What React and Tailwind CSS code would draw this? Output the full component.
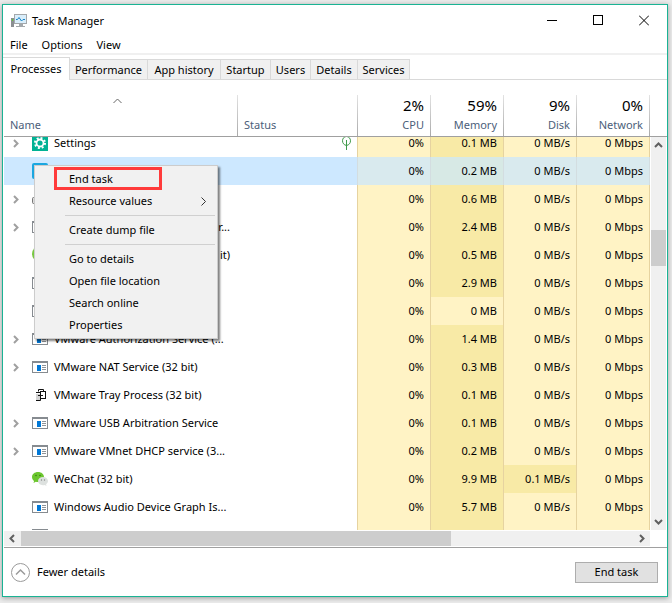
import React from 'react';

const TABS = [
  { label: 'Performance', width: 'w-[78px]' },
  { label: 'App history', width: 'w-[73px]' },
  { label: 'Startup', width: 'w-[50px]' },
  { label: 'Users', width: 'w-[40px]' },
  { label: 'Details', width: 'w-[47px]' },
  { label: 'Services', width: 'w-[52px]' },
];

const METRICS = [
  { label: 'CPU', total: '2%' },
  { label: 'Memory', total: '59%' },
  { label: 'Disk', total: '9%' },
  { label: 'Network', total: '0%' },
];

const PROCESSES = [
  { name: 'Settings', icon: 'settings', expandable: true, suspended: true, memory: '0.1 MB' },
  { name: '', icon: 'app', selected: true, memory: '0.2 MB' },
  { name: '', icon: 'printer', expandable: true, memory: '0.6 MB' },
  { name: 'r...', icon: 'service', expandable: true, alignEnd: true, memory: '2.4 MB' },
  { name: 'it)', icon: 'green', alignEnd: true, memory: '0.5 MB' },
  { name: '', icon: 'service', memory: '2.9 MB' },
  { name: '', icon: 'service', memory: '0 MB' },
  { name: 'VMware Authorization Service (...', icon: 'service', expandable: true, memory: '1.4 MB' },
  { name: 'VMware NAT Service (32 bit)', icon: 'service', expandable: true, memory: '0.3 MB' },
  { name: 'VMware Tray Process (32 bit)', icon: 'tray', memory: '0.1 MB' },
  { name: 'VMware USB Arbitration Service', icon: 'service', expandable: true, memory: '0.1 MB' },
  { name: 'VMware VMnet DHCP service (3...', icon: 'service', expandable: true, memory: '0.2 MB' },
  { name: 'WeChat (32 bit)', icon: 'wechat', memory: '9.9 MB', disk: '0.1 MB/s' },
  { name: 'Windows Audio Device Graph Is...', icon: 'service', memory: '5.7 MB' },
  { name: '', icon: 'service', blank: true },
];

const Chevron = ({ direction, className }) => {
  const points = {
    up: '1,6 4.5,2.5 8,6',
    down: '1,3 4.5,6.5 8,3',
    left: '6,1 2.5,4.5 6,8',
    right: '3,1 6.5,4.5 3,8',
  };
  return (
    <svg width="9" height="9" viewBox="0 0 9 9" fill="none" className={className}>
      <polyline points={points[direction]} stroke="currentColor" strokeWidth="2" />
    </svg>
  );
};

const TaskManagerIcon = () => (
  <svg width="17" height="16" viewBox="0 0 17 16">
    <rect x="0" y="5" width="3" height="9" fill="#8b8f92" />
    <rect x="1" y="6" width="1" height="2" fill="#5fd12a" />
    <rect x="3.5" y="1.5" width="12" height="9" fill="#d9eefb" stroke="#a3a8ab" />
    <polyline points="5,6.5 6.500,6.500 8,4.500 10.500,8 12,6.500 14,6.500" fill="none" stroke="#1583c7" />
    <path d="M8 11h4v2h2v1H5v-1h3z" fill="#a3a8ab" />
  </svg>
);

const ProcessIcon = ({ type }) => {
  switch (type) {
    case 'settings':
      return (
        <svg width="16" height="16" viewBox="0 0 16 16">
          <rect width="16" height="16" fill="#00b294" />
          <circle cx="8" cy="8" r="3.500" fill="none" stroke="#fff" strokeWidth="1.800" />
          <circle cx="8" cy="8" r="5" fill="none" stroke="#fff" strokeWidth="2" strokeDasharray="1.96 1.96" />
        </svg>
      );
    case 'app':
      return (
        <svg width="16" height="16" viewBox="0 0 16 16">
          <rect width="16" height="16" rx="2" fill="#1ba7e0" />
        </svg>
      );
    case 'printer':
      return (
        <svg width="16" height="16" viewBox="0 0 16 16">
          <path d="M3 4h10v3H3z" fill="#c4c4c4" />
          <rect x="0.5" y="6.5" width="15" height="6" rx="1" fill="#ddd" stroke="#777" />
        </svg>
      );
    case 'green':
      return (
        <svg width="16" height="16" viewBox="0 0 16 16">
          <circle cx="8" cy="7" r="8" fill="#7ac943" />
        </svg>
      );
    case 'tray':
      return (
        <svg width="16" height="16" viewBox="0 0 16 16" fill="none">
          <rect x="4" y="7" width="4" height="6" fill="#d4d4d4" />
          <g stroke="#111">
            <path d="M6.500 4.500V2.500H11.500V4.500" />
            <rect x="8.500" y="4.500" width="5" height="7" />
            <path d="M4 5.500H8.500V13.500H4M6 8.500H11" />
          </g>
        </svg>
      );
    case 'wechat':
      return (
        <svg width="16" height="16" viewBox="0 0 16 16">
          <path d="M6 1C2.500 1 0 3.200 0 6c0 1.600.8 3 2.100 3.900L1.500 12l2.300-1.200c.7.2 1.400.3 2.200.3 3.500 0 6-2.300 6-5.100S9.500 1 6 1z" fill="#6cc62f" />
          <path d="M11 6c-2.900 0-5 1.800-5 4.100s2.100 4.100 5 4.100c.6 0 1.200-.1 1.700-.2l1.800.9-.4-1.600c1.100-.7 1.900-1.900 1.900-3.200C16 7.800 13.900 6 11 6z" fill="#dde1df" />
          <g fill="#3b7c17">
            <circle cx="4" cy="4.500" r=".8" />
            <circle cx="8" cy="4.500" r=".8" />
          </g>
          <g fill="#888">
            <circle cx="9.500" cy="9" r=".7" />
            <circle cx="12.500" cy="9" r=".7" />
          </g>
        </svg>
      );
    default:
      return (
        <svg width="16" height="12" viewBox="0 0 16 12" shapeRendering="crispEdges">
          <rect width="16" height="12" fill="#868b90" />
          <rect x="1" y="2" width="14" height="9" fill="#fff" />
          <rect x="5" y="4" width="4" height="6" fill="#0078d7" />
          <path d="M10 4h4v1h-4zM10 6h4v1h-4zM10 8h4v1h-4z" fill="#8f9499" />
        </svg>
      );
  }
};

const LeafIcon = () => (
  <svg width="9" height="14" viewBox="0 0 9 14" fill="none" stroke="#3f9a4a">
    <path d="M4.500 9.500C2 9 .500 7.200.500 4.800.500 2.400 2.200.500 4.500.500s4 1.900 4 4.300c0 2.400-1.500 4.200-4 4.700zM4.500 4v10" />
  </svg>
);

const Columns = () => (
  <colgroup>
    <col />
    <col className="w-[120px]" />
    <col className="w-[73px]" />
    <col className="w-[73px]" />
    <col className="w-[73px]" />
    <col className="w-[73px]" />
  </colgroup>
);

const TitleBar = () => (
  <header className="flex h-[31px] shrink-0 items-center">
    <div className="flex items-center gap-1 pl-2">
      <TaskManagerIcon />
      <h1>Task Manager</h1>
    </div>
    <div className="ml-auto flex h-full">
      <button aria-label="Minimize" className="flex w-[46px] items-center justify-center">
        <svg width="10" height="11" viewBox="0 0 10 11" stroke="#000">
          <path d="M0 5.500h10" />
        </svg>
      </button>
      <button aria-label="Maximize" className="flex w-[46px] items-center justify-center">
        <svg width="10" height="11" viewBox="0 0 10 11" fill="none" stroke="#000">
          <rect x="0.500" y="0.500" width="9" height="9" />
        </svg>
      </button>
      <button aria-label="Close" className="flex w-[46px] items-center justify-center">
        <svg width="10" height="11" viewBox="0 0 10 11" stroke="#000">
          <path d="M0 0.500l10 10M10 0.500l-10 10" />
        </svg>
      </button>
    </div>
  </header>
);

const MenuBar = () => (
  <nav className="flex h-[19px] shrink-0 items-center gap-3.5 border-b-2 border-[#f0f0f0] pl-[7px]">
    <button>File</button>
    <button>Options</button>
    <button>View</button>
  </nav>
);

const TabStrip = () => (
  <div role="tablist" className="mt-0.5 flex h-[23px] shrink-0 items-end border-b border-[#d9d9d9]">
    <button
      role="tab"
      aria-selected="true"
      className="-mb-px h-[23px] w-[67px] border-t border-r border-[#d9d9d9] bg-white"
    >
      Processes
    </button>
    {TABS.map((tab) => (
      <button
        key={tab.label}
        role="tab"
        aria-selected="false"
        className={`h-5 border-t border-r border-[#d9d9d9] bg-[#f0f0f0] ${tab.width}`}
      >
        {tab.label}
      </button>
    ))}
  </div>
);

const headEdge =
  'border-r [border-image:linear-gradient(#e4e4e4,#a8a8a8)_1]';

const HeaderRow = () => (
  <div className="ml-px shrink-0 border-b border-[#a0a0a0] pt-[15px] pr-[17px]">
    <table className="w-full table-fixed border-separate border-spacing-0 text-[#4c607a]">
      <Columns />
      <thead>
        <tr className="h-[41px]">
          <th className={`p-0 font-normal ${headEdge}`}>
            <div className="flex h-[41px] flex-col justify-between pt-0.5 pb-[3px]">
              <svg width="9" height="9" viewBox="0 0 9 9" fill="none" stroke="#666" className="ml-[109px]">
                <polyline points="0.500,6 4.500,2 8.500,6" />
              </svg>
              <span className="pl-1.5 text-left leading-4">Name</span>
            </div>
          </th>
          <th className={`p-0 pb-[3px] pl-1.5 text-left align-bottom leading-4 font-normal ${headEdge}`}>Status</th>
          {METRICS.map((metric) => (
            <th key={metric.label} className={`p-0 pr-1.5 pb-[3px] text-right align-bottom font-normal ${headEdge}`}>
              <div className="pb-0.5 text-[15px] leading-5 text-black">{metric.total}</div>
              <div className="leading-4">{metric.label}</div>
            </th>
          ))}
        </tr>
      </thead>
    </table>
  </div>
);

const MetricCell = ({ value, level, selected }) => {
  let tone = level === 'high' ? 'bg-[#f8eaa6] border-[#e6d3a0]' : 'bg-[#fff3c5] border-[#e6d3a0]';
  if (selected) {
    tone = level === 'high' ? 'bg-[#d7e9e5] border-[#d3dde0]' : 'bg-[#d9eaee] border-[#d3dde0]';
  }
  return <td className={`border-r p-0 pr-1.5 text-right ${tone}`}>{value}</td>;
};

const ProcessRow = ({ process }) => {
  const { name, icon, expandable, suspended, selected, alignEnd, memory, disk, blank } = process;
  return (
    <tr className={`h-7 ${selected ? 'bg-[#cde8ff]' : ''}`}>
      <td className="p-0">
        <div className="flex h-7 items-center">
          <span className="flex w-7 shrink-0 pl-[7px] text-[#a0a0a0]">
            {expandable && <Chevron direction="right" />}
          </span>
          <span className="flex w-[22px] shrink-0">
            <ProcessIcon type={icon} />
          </span>
          <span className={`whitespace-nowrap ${alignEnd ? 'ml-auto pr-2' : ''}`}>{name}</span>
        </div>
      </td>
      <td className={`border-r p-0 pr-1.5 ${selected ? 'border-[#d3dde0]' : 'border-[#e6d3a0]'}`}>
        {suspended && (
          <span className="flex justify-end">
            <LeafIcon />
          </span>
        )}
      </td>
      <MetricCell value={blank ? '' : '0%'} selected={selected} />
      <MetricCell value={memory} level={memory === '0 MB' ? 'low' : 'high'} selected={selected} />
      <MetricCell value={blank ? '' : disk || '0 MB/s'} level={disk ? 'high' : 'low'} selected={selected} />
      <MetricCell value={blank ? '' : '0 Mbps'} selected={selected} />
    </tr>
  );
};

const MenuItem = ({ children }) => (
  <button role="menuitem" className="flex h-[22px] w-full items-center pr-2.5 pl-[34px] text-left">
    {children}
  </button>
);

const MenuDivider = () => <hr className="my-[3px] mr-0.5 ml-[30px] border-[#d0d0d0]" />;

const ContextMenu = () => (
  <div
    role="menu"
    className="absolute top-7 left-[30px] w-[184px] border border-[#ccc] bg-[#f1f1f1] py-0.5 shadow-[2px_2px_2px_rgba(0,0,0,0.5)]"
  >
    <MenuItem>End task</MenuItem>
    <span className="absolute top-px left-[19px] h-[23px] w-[108px] border-3 border-[#ff3b3b]" />
    <MenuItem>
      Resource values
      <svg width="7" height="9" viewBox="0 0 7 9" fill="none" stroke="#333" className="ml-auto">
        <polyline points="1.500,0.500 5.500,4.500 1.500,8.500" />
      </svg>
    </MenuItem>
    <MenuDivider />
    <MenuItem>Create dump file</MenuItem>
    <MenuDivider />
    <MenuItem>Go to details</MenuItem>
    <MenuItem>Open file location</MenuItem>
    <MenuItem>Search online</MenuItem>
    <MenuItem>Properties</MenuItem>
  </div>
);

const VerticalScrollbar = () => (
  <div className="mr-px ml-px flex w-[15px] shrink-0 flex-col items-center bg-[#f0f0f0] text-[#606060]">
    <button aria-label="Scroll up" className="flex h-[17px] w-full items-center justify-center">
      <Chevron direction="up" />
    </button>
    <div className="grow-[76]" />
    <div className="h-9 w-full bg-[#cdcdcd]" />
    <div className="grow-[247]" />
    <button aria-label="Scroll down" className="flex h-[17px] w-full items-center justify-center">
      <Chevron direction="down" />
    </button>
  </div>
);

const HorizontalScrollbar = () => (
  <div className="mt-px mr-[17px] ml-px flex h-[15px] shrink-0 bg-[#f0f0f0] text-[#606060]">
    <button aria-label="Scroll left" className="flex w-[17px] items-center justify-center">
      <Chevron direction="left" />
    </button>
    <div className="grow-[430] bg-[#cdcdcd]" />
    <div className="grow-[182]" />
    <button aria-label="Scroll right" className="flex w-[17px] items-center justify-center">
      <Chevron direction="right" />
    </button>
  </div>
);

const Footer = () => (
  <footer className="mt-px ml-px flex h-[49px] shrink-0 items-center justify-between border-t border-[#a0a0a0] pr-[9px] pl-[7px]">
    <button className="flex items-center gap-[7px]">
      <svg width="19" height="19" viewBox="0 0 19 19" fill="none" stroke="#9a9a9a">
        <circle cx="9.500" cy="9.500" r="9" />
        <polyline points="5,11.500 9.500,7 14,11.500" strokeWidth="1.500" />
      </svg>
      Fewer details
    </button>
    <button className="h-[21px] w-[83px] border border-[#adadad] bg-[#e1e1e1]">End task</button>
  </footer>
);

const App = () => (
  <div className="flex h-screen bg-[#ebebeb] pt-1 pr-1 pb-1.5 pl-0.5 font-['Noto_Sans','Open_Sans',sans-serif] text-[11px] leading-4 text-black">
    <main className="flex min-w-0 flex-1 flex-col border border-[#1ab394] bg-white shadow-[0_1px_5px_rgba(0,0,0,0.35)]">
      <TitleBar />
      <MenuBar />
      <TabStrip />
      <HeaderRow />
      <div className="relative ml-px flex min-h-0 flex-1">
        <div className="min-w-0 flex-1 overflow-hidden">
          <table className="-mt-2 w-full table-fixed border-separate border-spacing-0 leading-3">
            <Columns />
            <tbody>
              {PROCESSES.map((process, index) => (
                <ProcessRow key={index} process={process} />
              ))}
            </tbody>
          </table>
        </div>
        <VerticalScrollbar />
        <ContextMenu />
      </div>
      <HorizontalScrollbar />
      <Footer />
    </main>
  </div>
);

export default App;
